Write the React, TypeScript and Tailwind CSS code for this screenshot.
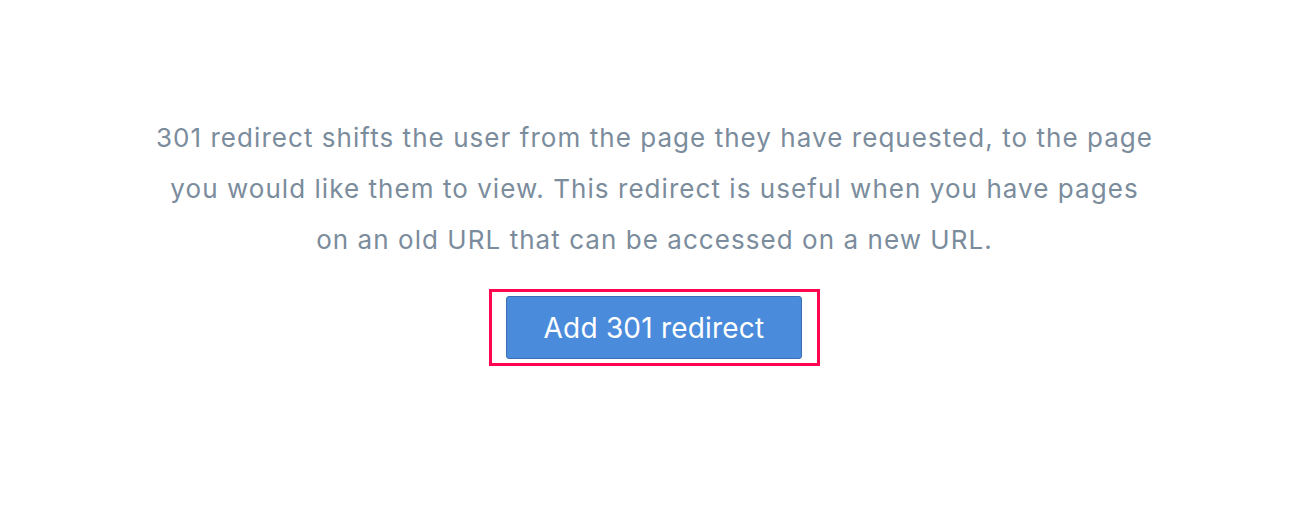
export default function App() {
  return (
    <div
      className="w-[1298px] h-[518px] bg-white flex flex-col items-center pt-[112px] pl-[11px]"
      style={{ fontFamily: "Inter, 'Noto Sans', sans-serif" }}
    >
      <p className="w-[1100px] text-center text-[26px] leading-[51px] tracking-[1.05px] text-[#7b8c9c]">
        301 redirect shifts the user from the page they have requested, to the page
        <br />
        you would like them to view. This redirect is useful when you have pages
        <br />
        on an old URL that can be accessed on a new URL.
      </p>
      <div className="mt-[24px] border-[3px] border-[#ff0550] pl-[14px] pr-[15px] py-[4px]">
        <button className="w-[296px] h-[63px] rounded-[3px] bg-[#4a8bdb] border border-[#3b6fb3] text-white text-[28px] tracking-[0.2px]">
          Add 301 redirect
        </button>
      </div>
    </div>
  )
}
